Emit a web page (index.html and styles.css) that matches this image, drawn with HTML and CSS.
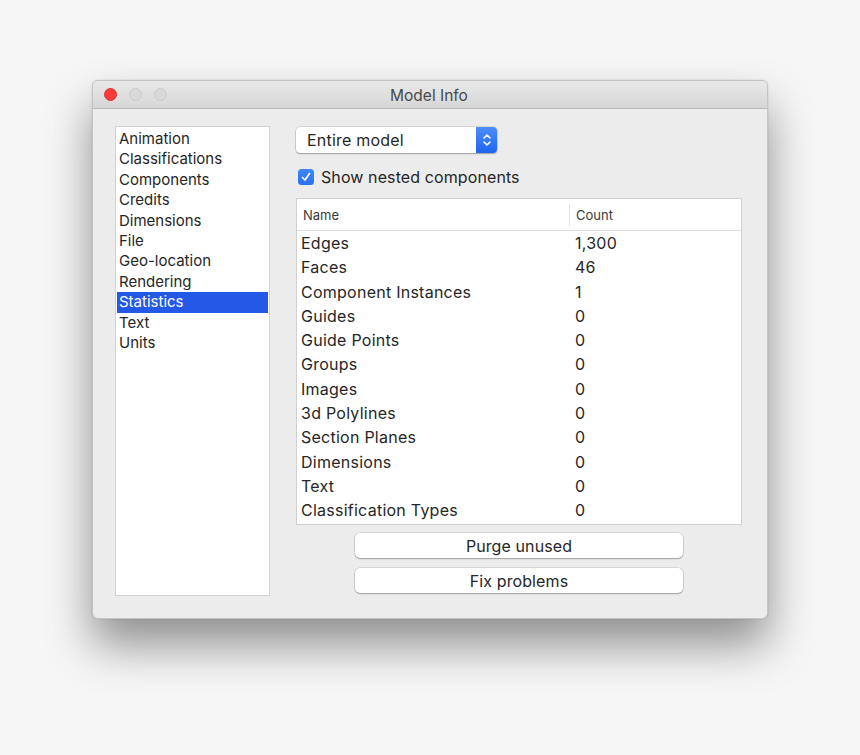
FILE: index.html
```html
<!DOCTYPE html>
<html>
<head>
<meta charset="utf-8">
<link rel="stylesheet" href="styles.css">
</head>
<body>
<div class="window">
  <div class="titlebar">
    <div class="lights">
      <span class="light red"></span>
      <span class="light"></span>
      <span class="light"></span>
    </div>
    <div class="title">Model Info</div>
  </div>
  <div class="content">
    <ul class="sidebar">
      <li>Animation</li>
      <li>Classifications</li>
      <li>Components</li>
      <li>Credits</li>
      <li>Dimensions</li>
      <li>File</li>
      <li>Geo-location</li>
      <li>Rendering</li>
      <li class="selected">Statistics</li>
      <li>Text</li>
      <li>Units</li>
    </ul>
    <div class="main">
      <div class="popup">
        <span class="popup-label">Entire model</span>
        <span class="stepper">
          <svg width="10" height="16" viewBox="0 0 10 16"><path d="M2 6 L5 3 L8 6 M2 10 L5 13 L8 10" fill="none" stroke="#fff" stroke-width="1.6" stroke-linecap="round" stroke-linejoin="round"/></svg>
        </span>
      </div>
      <label class="check-row">
        <span class="checkbox">
          <svg width="12" height="12" viewBox="0 0 12 12"><path d="M2.5 6.5 L5 9 L9.5 2.5" fill="none" stroke="#fff" stroke-width="1.7" stroke-linecap="round" stroke-linejoin="round"/></svg>
        </span>
        <span>Show nested components</span>
      </label>
      <div class="table">
        <div class="thead">
          <span class="th name-col">Name</span>
          <span class="th count-col">Count</span>
        </div>
        <div class="tbody">
          <div class="tr"><span class="name-col">Edges</span><span class="count-col">1,300</span></div>
          <div class="tr"><span class="name-col">Faces</span><span class="count-col">46</span></div>
          <div class="tr"><span class="name-col">Component Instances</span><span class="count-col">1</span></div>
          <div class="tr"><span class="name-col">Guides</span><span class="count-col">0</span></div>
          <div class="tr"><span class="name-col">Guide Points</span><span class="count-col">0</span></div>
          <div class="tr"><span class="name-col">Groups</span><span class="count-col">0</span></div>
          <div class="tr"><span class="name-col">Images</span><span class="count-col">0</span></div>
          <div class="tr"><span class="name-col">3d Polylines</span><span class="count-col">0</span></div>
          <div class="tr"><span class="name-col">Section Planes</span><span class="count-col">0</span></div>
          <div class="tr"><span class="name-col">Dimensions</span><span class="count-col">0</span></div>
          <div class="tr"><span class="name-col">Text</span><span class="count-col">0</span></div>
          <div class="tr"><span class="name-col">Classification Types</span><span class="count-col">0</span></div>
        </div>
      </div>
      <div class="buttons">
        <button class="btn">Purge unused</button>
        <button class="btn">Fix problems</button>
      </div>
    </div>
  </div>
</div>
</body>
</html>
```

FILE: styles.css
```css
* { box-sizing: border-box; }
html, body { margin: 0; padding: 0; }
body {
  background: #f6f6f6;
  font-family: "Inter", "Liberation Sans", sans-serif;
  color: #262626;
  width: 860px;
  height: 755px;
  overflow: hidden;
  padding-top: 80px;
}
.window {
  width: 676px;
  height: 539px;
  margin: 0 auto;
  background: #ececec;
  border: 1px solid #c4c4c4;
  border-radius: 6px;
  box-shadow: 0 26px 46px rgba(0,0,0,0.42), 0 0 2px rgba(0,0,0,0.15);
  display: flex;
  flex-direction: column;
  overflow: hidden;
}
.titlebar {
  height: 28px;
  flex: none;
  background: linear-gradient(#e9e9e9, #d6d6d6);
  border-bottom: 1px solid #b9b9b9;
  display: flex;
  align-items: center;
  position: relative;
}
.lights {
  display: flex;
  gap: 12px;
  padding-left: 11px;
}
.light {
  width: 13px;
  height: 13px;
  border-radius: 50%;
  background: #d9d9d9;
  border: 1px solid #cacaca;
}
.light.red {
  background: #fc3a3a;
  border-color: #e23232;
}
.title {
  position: absolute;
  left: 0;
  right: 0;
  text-align: center;
  font-size: 15.5px;
  color: #4a4a4a;
  top: 5px;
  padding-right: 2px;
}
.content {
  flex: 1;
  display: flex;
  padding: 17px 25px 22px 22px;
  gap: 26px;
}
.sidebar {
  flex: none;
  list-style: none;
  margin: 0;
  padding: 2px 1px;
  width: 155px;
  background: #fff;
  border: 1px solid #d2d2d2;
  font-size: 15px;
}
.sidebar li {
  height: 20.4px;
  line-height: 20.4px;
  padding-left: 2px;
  white-space: nowrap;
}
.sidebar li.selected {
  background: #2458e6;
  color: #fff;
}
.main {
  flex: none;
  width: 446px;
  display: flex;
  flex-direction: column;
}
.popup {
  width: 201px;
  height: 26px;
  margin-top: 1px;
  background: #fff;
  border-radius: 4px;
  box-shadow: 0 0 0 0.5px rgba(0,0,0,0.2), 0 1px 1.5px rgba(0,0,0,0.25);
  display: flex;
  align-items: center;
  justify-content: space-between;
  font-size: 16px;
  letter-spacing: 0.2px;
  overflow: hidden;
}
.popup-label { padding-left: 11px; }
.stepper {
  width: 21px;
  height: 26px;
  background: linear-gradient(#4d8ef8, #1f64f2);
  display: flex;
  align-items: center;
  justify-content: center;
}
.check-row {
  display: flex;
  align-items: center;
  gap: 7px;
  margin-top: 15px;
  padding-left: 2px;
  font-size: 16px;
  letter-spacing: 0.1px;
  height: 18px;
}
.checkbox {
  width: 16px;
  height: 16px;
  border-radius: 3.5px;
  background: linear-gradient(#3f87f7, #2a72f0);
  display: flex;
  align-items: center;
  justify-content: center;
}
.table {
  margin-top: 12px;
  width: 446px;
  height: 327px;
  background: #fff;
  border: 1px solid #d0d0d0;
}
.thead {
  height: 32px;
  display: flex;
  align-items: center;
  border-bottom: 1px solid #dedede;
  font-size: 13px;
  color: #3a3a3a;
}
.th.name-col {
  width: 273px;
  padding-left: 6px;
  border-right: 1px solid #e0e0e0;
  line-height: 22px;
}
.th.count-col { padding-left: 6px; }
.tbody { font-size: 16px; letter-spacing: 0.25px; }
.tr {
  height: 24.3px;
  line-height: 24.3px;
  display: flex;
}
.tr .name-col {
  width: 278px;
  padding-left: 4px;
}
.buttons {
  display: flex;
  flex-direction: column;
  align-items: center;
  gap: 10px;
  margin-top: 8px;
}
.btn {
  width: 328px;
  height: 25px;
  background: #fff;
  border: none;
  border-radius: 5px;
  box-shadow: 0 0 0 0.5px rgba(0,0,0,0.18), 0 1px 1.5px rgba(0,0,0,0.25);
  font-family: inherit;
  font-size: 16px;
  letter-spacing: 0.1px;
  color: #262626;
  padding: 0;
}
```
